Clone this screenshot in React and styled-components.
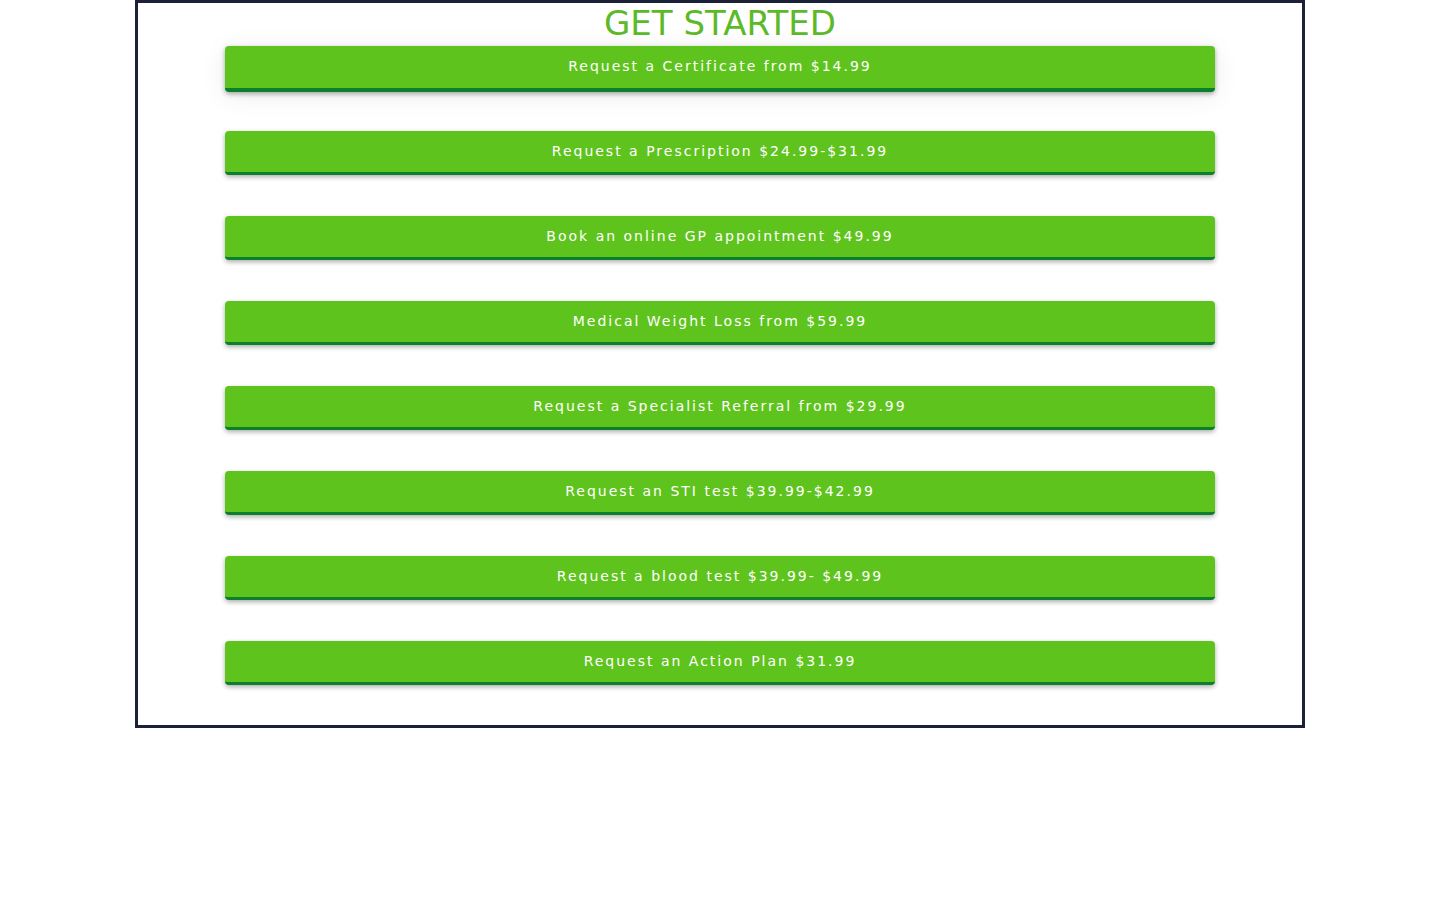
import React from "react";
import styled, { createGlobalStyle } from "styled-components";

const GlobalStyle = createGlobalStyle`
  body {
    margin: 0;
    background: #ffffff;
    font-family: "DejaVu Sans", "Liberation Sans", sans-serif;
  }
`;

const Container = styled.div`
  width: 1170px;
  height: 728px;
  margin: 0 auto;
  box-sizing: border-box;
  border: 3px solid #1b2137;
  display: flex;
  flex-direction: column;
  align-items: center;
`;

const Title = styled.h1`
  margin: 0;
  height: 43px;
  line-height: 41px;
  font-size: 34px;
  font-weight: normal;
  color: #5cba29;
  text-align: center;
`;

const ButtonList = styled.div`
  width: 990px;
  display: flex;
  flex-direction: column;
  gap: 41px;
`;

const ServiceButton = styled.button`
  width: 100%;
  height: ${(p) => (p.$active ? "46px" : "44px")};
  margin-bottom: ${(p) => (p.$active ? "-2px" : "0")};
  box-sizing: border-box;
  border: none;
  border-bottom: ${(p) => (p.$active ? "4px" : "3px")} solid #0b7f2c;
  border-radius: 4px;
  background: #5fc31d;
  color: #ffffff;
  font-family: "DejaVu Sans", sans-serif;
  font-size: 14px;
  letter-spacing: 2px;
  padding: 0 0 ${(p) => (p.$active ? "2px" : "1px")};
  cursor: pointer;
  box-shadow: 0 2px 5px rgba(0, 0, 0, 0.33),
    ${(p) =>
      p.$active ? "0 4px 26px rgba(0, 0, 0, 0.08)" : "0 0 0 transparent"};
`;

const services = [
  "Request a Certificate from $14.99",
  "Request a Prescription $24.99-$31.99",
  "Book an online GP appointment $49.99",
  "Medical Weight Loss from $59.99",
  "Request a Specialist Referral from $29.99",
  "Request an STI test $39.99-$42.99",
  "Request a blood test $39.99- $49.99",
  "Request an Action Plan $31.99",
];

export default function App() {
  return (
    <>
      <GlobalStyle />
      <Container>
        <Title>GET STARTED</Title>
        <ButtonList>
          {services.map((label, i) => (
            <ServiceButton key={label} $active={i === 0}>
              {label}
            </ServiceButton>
          ))}
        </ButtonList>
      </Container>
    </>
  );
}
